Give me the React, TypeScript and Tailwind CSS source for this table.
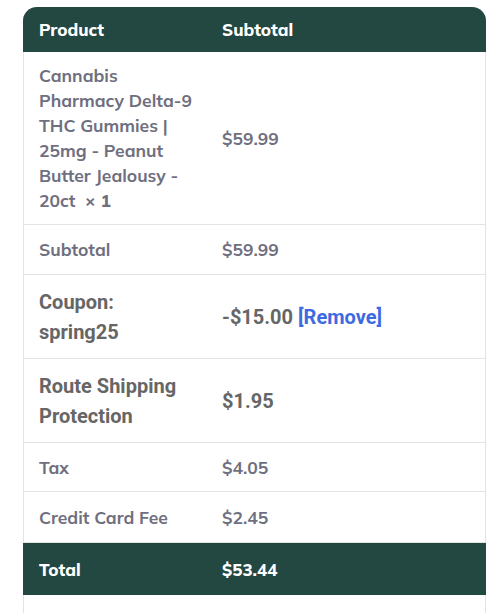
import * as React from "react";

type Row = {
  label: React.ReactNode;
  value: React.ReactNode;
  roboto?: boolean;
  pad: string;
};

const rows: Row[] = [
  { label: "Subtotal", value: "$59.99", pad: "py-[12px]" },
  {
    label: (
      <>
        Coupon:
        <br />
        spring25
      </>
    ),
    value: (
      <>
        -$15.00 <a href="#" className="text-[#3e6ae1]">[Remove]</a>
      </>
    ),
    roboto: true,
    pad: "py-[11.5px]",
  },
  {
    label: (
      <>
        Route Shipping
        <br />
        Protection
      </>
    ),
    value: "$1.95",
    roboto: true,
    pad: "py-[11.5px]",
  },
  { label: "Tax", value: "$4.05", pad: "py-[11.5px]" },
  { label: "Credit Card Fee", value: "$2.45", pad: "py-[12.5px]" },
];

const body = "font-['Mulish','Nunito_Sans',sans-serif]";
const roboto = "font-['Roboto',sans-serif]";

export default function App() {
  return (
    <div className="min-h-[613px] overflow-hidden bg-white pt-[7px] pl-[23px]">
      <div
        className={`w-[463px] rounded-t-[14px] border-x border-[#e3e3e3] text-[17.5px] leading-[25px] ${body}`}
      >
        {/* header */}
        <div className="-mx-px grid grid-cols-[184px_1fr] rounded-t-[14px] bg-[#234741] py-[10px] text-[17px] font-extrabold text-white">
          <div className="pl-[16px]">Product</div>
          <div className="pl-[15px]">Subtotal</div>
        </div>

        {/* line item */}
        <div className="grid grid-cols-[183px_1fr] items-center border-b border-[#e3e3e3] py-[11px] font-bold text-[#6f6f80]">
          <div className="pl-[15px]">
            Cannabis
            <br />
            Pharmacy Delta-9
            <br />
            THC Gummies |
            <br />
            25mg - Peanut
            <br />
            Butter Jealousy -
            <br />
            20ct&nbsp; <strong className="font-extrabold">× 1</strong>
          </div>
          <div className="pl-[15px]">$59.99</div>
        </div>

        {rows.map((r, i) => (
          <div
            key={i}
            className={`grid grid-cols-[183px_1fr] items-center border-b border-[#e3e3e3] ${r.pad} ${
              r.roboto
                ? `${roboto} text-[20px] leading-[30px] font-bold text-[#666666]`
                : "font-bold text-[#6f6f80]"
            }`}
          >
            <div className="pl-[15px]">{r.label}</div>
            <div className="pl-[15px]">{r.value}</div>
          </div>
        ))}

        {/* total */}
        <div className="-mx-px grid grid-cols-[184px_1fr] bg-[#234741] py-[13.5px] text-[17px] font-extrabold text-white">
          <div className="pl-[16px]">Total</div>
          <div className="pl-[15px]">$53.44</div>
        </div>

        <div className="h-[60px]" />
      </div>
    </div>
  );
}
